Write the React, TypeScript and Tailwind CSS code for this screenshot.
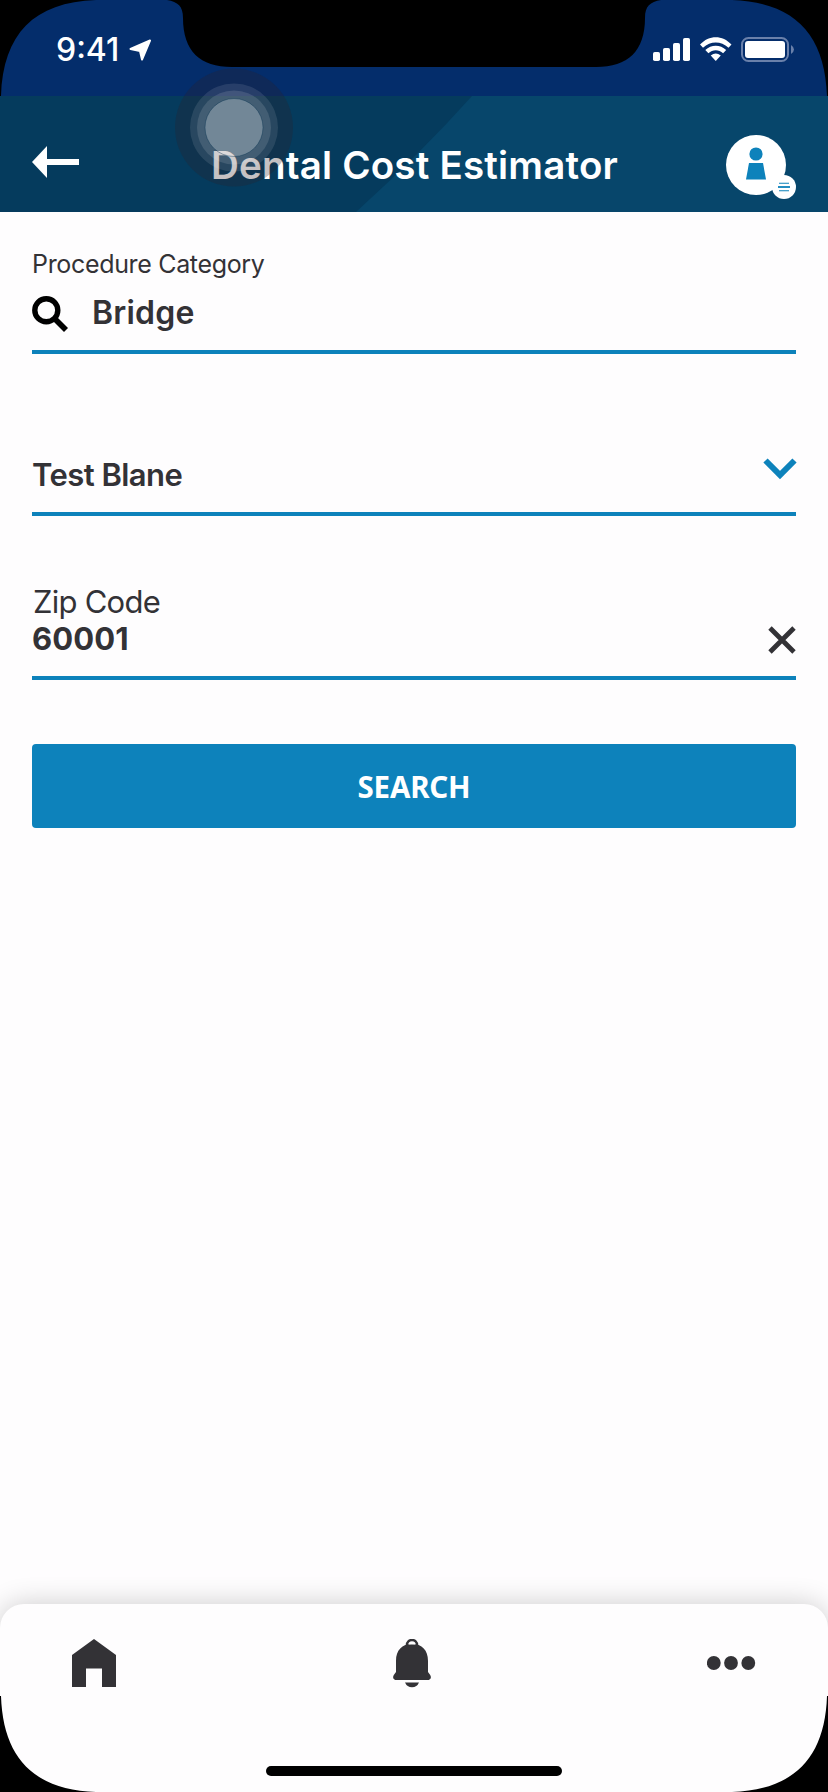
import React from "react";

function StatusBar() {
  return (
    <div className="flex h-24 items-start justify-between bg-[#042d6b] pr-[33px] pl-14">
      <div className="flex items-start gap-[11px] pt-[30px]">
        <span className="w-[62px] text-[32px] leading-10 font-medium whitespace-nowrap text-white">9:41</span>
        <svg className="mt-[9px]" width="23" height="23" viewBox="0 0 23 23">
          <path d="M21 1.5 13 20.5 11 12 1.5 10Z" fill="#fff" stroke="#fff" strokeWidth="2" strokeLinejoin="round" />
        </svg>
      </div>
      <div className="flex items-start gap-[9px] pt-[37px]">
        <svg width="38" height="25" viewBox="0 0 38 25" fill="#fff">
          <rect x="0" y="15" width="7" height="9" rx="1.8" />
          <rect x="10" y="11" width="7" height="13" rx="1.8" />
          <rect x="20" y="6" width="7" height="18" rx="1.8" />
          <rect x="30" y="1" width="7" height="23" rx="1.8" />
        </svg>
        <svg width="32" height="25" viewBox="0 0 32 25" fill="#fff">
          <path d="M0 7.6C9-2.2 22.5-2.2 31.5 7.6L28.5 10.8C21 3.6 10.5 3.6 3 10.8Z" />
          <path d="M5.3 13C11.3 7.2 20.2 7.2 26.2 13L23.1 16.2C18.8 12.2 12.7 12.2 8.4 16.2Z" />
          <path d="M10.7 18.4Q15.75 14.4 20.8 18.4L15.75 24Z" />
        </svg>
        <svg width="54" height="25" viewBox="0 0 54 25">
          <rect x="1" y="1" width="46" height="23" rx="6.5" fill="none" stroke="#6a80aa" strokeWidth="2" />
          <rect x="4" y="4" width="40" height="17" rx="3" fill="#fff" />
          <path d="M50 8Q53 10 53 12.5T50 17Z" fill="#6a80aa" />
        </svg>
      </div>
    </div>
  );
}

function Header() {
  return (
    <header className="relative flex h-[116px] items-start justify-between bg-[#053b5d] px-8">
      <svg className="absolute inset-0" width="828" height="116" viewBox="0 0 828 116">
        <path d="M472 0H828V116H356Q420 58 472 0Z" fill="#07466b" />
      </svg>
      <svg className="relative mt-[50px]" width="48" height="32" viewBox="0 0 48 32">
        <path d="M0 16 15 0V13H47V19H15V32Z" fill="#fff" />
      </svg>
      <h1 className="relative mt-[44px] ml-[24px] text-[38.5px] leading-[50px] font-semibold tracking-[0.2px] whitespace-nowrap text-white">Dental Cost Estimator</h1>
      <svg className="relative mt-[38px]" width="71" height="66" viewBox="0 0 71 66">
        <circle cx="31" cy="31" r="30" fill="#fff" />
        <circle cx="31" cy="20" r="6.6" fill="#0d82bb" />
        <path d="M24 29H38L41 45.5H21Z" fill="#0d82bb" />
        <circle cx="59" cy="53" r="12" fill="#fff" />
        <path d="M54 49.2H64M54 56.7H64" stroke="#0d82bb" strokeWidth="1.1" />
        <path d="M53 53H65" stroke="#0d82bb" strokeWidth="1.8" />
      </svg>
    </header>
  );
}

function Form() {
  return (
    <main className="flex flex-1 flex-col px-8 text-[#333236]">
      <div className="flex h-[142px] flex-col border-b-4 border-[#0d82bb] pt-9">
        <label className="text-[25px] leading-8 tracking-[-0.33px] whitespace-nowrap">Procedure Category</label>
        <div className="flex items-start gap-[23px] pt-[15px]">
          <svg className="mt-px" width="37" height="37" viewBox="0 0 37 37" fill="none" stroke="#000">
            <circle cx="14.3" cy="14.3" r="11.5" strokeWidth="5.4" />
            <path d="M22 22 34 34" strokeWidth="5.6" />
          </svg>
          <span className="text-[32px] leading-9 font-semibold tracking-[0.2px]">Bridge</span>
        </div>
      </div>
      <div className="flex h-[162px] items-start justify-between border-b-4 border-[#0d82bb] pt-[102px]">
        <span className="text-[31px] leading-[38px] font-semibold tracking-[-0.55px]">Test Blane</span>
        <svg className="mt-px -mr-px" width="34" height="23" viewBox="0 0 34 23">
          <path d="M2.5 3.5 17 18 31.5 3.5" fill="none" stroke="#0d82bb" strokeWidth="6" />
        </svg>
      </div>
      <div className="flex h-[164px] flex-col border-b-4 border-[#0d82bb] pt-[67px]">
        <label className="pl-px text-[31px] leading-[38px] font-normal tracking-[-0.75px]">Zip Code</label>
        <div className="flex items-start justify-between">
          <span className="text-[31px] leading-9 font-bold tracking-[0.1px]">60001</span>
          <svg className="mt-[5px]" width="28" height="28" viewBox="0 0 28 28">
            <path d="M2 2 26 26M26 2 2 26" stroke="#333236" strokeWidth="4.8" />
          </svg>
        </div>
      </div>
      <button className="mt-16 h-[84px] rounded bg-[#0d82bb] pt-[3px] font-['Noto_Sans',sans-serif] text-[29.5px] font-bold tracking-[-0.2px] text-white">SEARCH</button>
    </main>
  );
}

function TabBar() {
  return (
    <nav className="flex h-[188px] flex-col items-center justify-between rounded-t-[24px] bg-[#fefdfe] pb-4 shadow-[0_0_28px_rgba(0,0,0,0.2)]">
      <div className="flex w-full justify-between px-[72px] pt-[35px]">
        <svg width="44" height="48" viewBox="0 0 44 48">
          <path d="M22 0 44 16V48H30V29.5H14V48H0V16Z" fill="#333236" />
        </svg>
        <svg width="38" height="49" viewBox="0 0 38 49" fill="#333236">
          <path d="M14 7.5V6a5 5 0 0 1 10 0V7.5" fill="none" stroke="#333236" strokeWidth="2.5" />
          <path d="M3 22C3 11 9 5 19 5S35 11 35 22V33L37.2 36C39 39 37 41 34.5 41H3.5C1 41-1 39 .8 36L3 33Z" />
          <path d="M12 43.5H26Q24 48.3 19 48.3T12 43.5Z" />
          <path d="M15.5 5.5Q16.5 3.5 19 3.5T22.5 5.5Z" fill="#fefdfe" />
        </svg>
        <svg width="49" height="48" viewBox="0 0 49 48" fill="#333236">
          <circle cx="6.8" cy="24" r="6.9" />
          <circle cx="24" cy="24" r="6.9" />
          <circle cx="41.3" cy="24" r="6.9" />
        </svg>
      </div>
      <div className="h-[10px] w-[296px] rounded-full bg-black" />
    </nav>
  );
}

function DeviceFrame() {
  return (
    <svg className="pointer-events-none absolute inset-0" width="828" height="1792" viewBox="0 0 828 1792">
      <circle cx="234" cy="127.5" r="59" fill="rgba(48,34,39,0.28)" />
      <circle cx="234" cy="127.5" r="44" fill="rgba(255,255,255,0.1)" />
      <circle cx="234" cy="127.5" r="37" fill="rgba(255,255,255,0.12)" />
      <circle cx="234" cy="127.5" r="29" fill="rgba(255,255,255,0.26)" stroke="rgba(5,50,80,0.4)" />
      <path d="M0 0H96C34 2 3 34 1 96H0Z" />
      <path d="M828 0H732C794 2 825 34 827 96H828Z" />
      <path d="M0 1696H1C3 1758 34 1790 96 1792H0Z" />
      <path d="M828 1696H827C825 1758 794 1790 732 1792H828Z" />
      <path d="M167 0C178 2 183 6 183 18C183 51 200 67 232 67H596C628 67 645 51 645 18C645 6 650 2 661 0Z" />
    </svg>
  );
}

export default function App() {
  return (
    <div className="relative flex h-[1792px] w-[828px] flex-col overflow-hidden bg-[#fefdfe] font-['Inter',sans-serif]">
      <StatusBar />
      <Header />
      <Form />
      <TabBar />
      <DeviceFrame />
    </div>
  );
}
